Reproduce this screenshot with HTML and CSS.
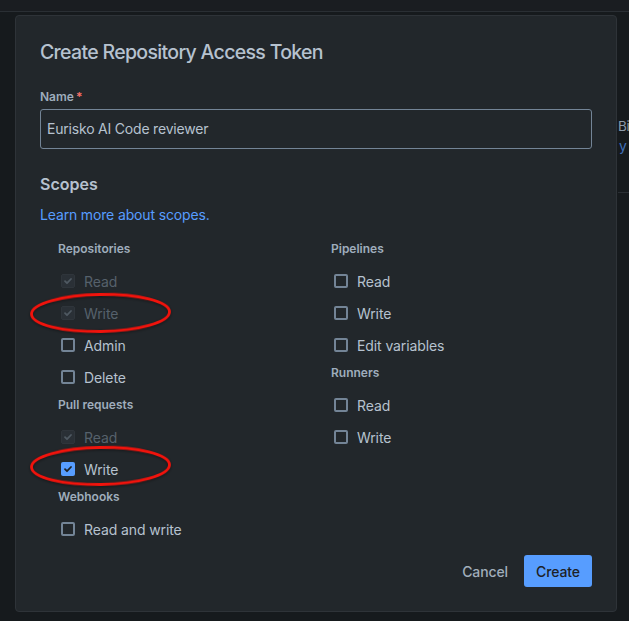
FILE: index.html
```html
<!DOCTYPE html>
<html>
<head>
<meta charset="utf-8">
<link rel="stylesheet" href="styles.css">
</head>
<body>
<div class="page">
  <div class="topbar"></div>
  <div class="bg-side">
    <div class="bg-line1">Bi</div>
    <div class="bg-link">y</div>
    <div class="bg-rule"></div>
  </div>

  <div class="modal">
    <h1 class="title">Create Repository Access Token</h1>
    <label class="field-label">Name<span class="req">*</span></label>
    <div class="input">Eurisko AI Code reviewer</div>

    <h2 class="scopes">Scopes</h2>
    <a class="learn">Learn more about scopes.</a>

    <div class="cols">
      <div class="col">
        <div class="grp">Repositories</div>
        <div class="row disabled"><span class="cb checked-dis"><svg viewBox="0 0 14 14"><path d="M4 7.2l2 2 4-4.2"/></svg></span>Read</div>
        <div class="row disabled"><span class="cb checked-dis"><svg viewBox="0 0 14 14"><path d="M4 7.2l2 2 4-4.2"/></svg></span>Write</div>
        <div class="row"><span class="cb"></span>Admin</div>
        <div class="row"><span class="cb"></span>Delete</div>
        <div class="grp">Pull requests</div>
        <div class="row disabled"><span class="cb checked-dis"><svg viewBox="0 0 14 14"><path d="M4 7.2l2 2 4-4.2"/></svg></span>Read</div>
        <div class="row"><span class="cb checked"><svg viewBox="0 0 14 14"><path d="M4 7.2l2 2 4-4.2"/></svg></span>Write</div>
        <div class="grp">Webhooks</div>
        <div class="row"><span class="cb"></span>Read and write</div>
      </div>
      <div class="col">
        <div class="grp">Pipelines</div>
        <div class="row"><span class="cb"></span>Read</div>
        <div class="row"><span class="cb"></span>Write</div>
        <div class="row"><span class="cb"></span>Edit variables</div>
        <div class="grp">Runners</div>
        <div class="row"><span class="cb"></span>Read</div>
        <div class="row"><span class="cb"></span>Write</div>
      </div>
    </div>

    <div class="footer">
      <button class="btn cancel">Cancel</button>
      <button class="btn create">Create</button>
    </div>
  </div>

  <svg class="marks" width="629" height="621" viewBox="0 0 629 621">
    <ellipse cx="100.5" cy="313" rx="69" ry="18.5" transform="rotate(-1 100 313)"/>
    <ellipse cx="100.5" cy="466" rx="69" ry="18.5" transform="rotate(-1 100 466)"/>
  </svg>
</div>
</body>
</html>
```

FILE: styles.css
```css
html, body {
  margin: 0;
  padding: 0;
  background: #161a1d;
  overflow: hidden;
}
.page {
  position: relative;
  width: 629px;
  height: 621px;
  font-family: "Inter", "Roboto", sans-serif;
  overflow: hidden;
}
.topbar {
  height: 11px;
  background: #1a1d21;
  border-bottom: 1px solid #2a2f34;
}
.bg-side {
  position: absolute;
  left: 618px;
  top: 12px;
  width: 11px;
  height: 600px;
}
.bg-line1 {
  margin-top: 104px;
  font-size: 13.5px;
  line-height: 20px;
  color: #8c9bab;
  white-space: nowrap;
  letter-spacing: -0.3px;
}
.bg-link {
  font-size: 14px;
  line-height: 20px;
  color: #3f6fb8;
  white-space: nowrap;
  margin-left: 1px;
}
.bg-rule {
  margin-top: 36px;
  height: 1px;
  background: #2a2f34;
  width: 11px;
}
.modal {
  position: absolute;
  left: 15px;
  top: 15px;
  width: 602px;
  box-sizing: border-box;
  background: #22272b;
  border: 1px solid #2e3338;
  border-radius: 4px;
  padding: 24px 24px 24px;
  color: #b6c2cf;
}
.title {
  margin: 0;
  font-size: 19.5px;
  line-height: 24px;
  font-weight: 500;
  color: #b6c2cf;
  letter-spacing: -0.68px;
}
.field-label {
  display: block;
  margin-top: 25px;
  font-size: 12px;
  line-height: 16px;
  font-weight: 600;
  color: #9fadbc;
}
.req {
  color: #f87168;
  margin-left: 2px;
}
.input {
  margin-top: 4px;
  height: 40px;
  box-sizing: border-box;
  border: 1px solid #738496;
  border-radius: 3px;
  background: #22272b;
  padding: 0 6px;
  font-size: 14px;
  line-height: 38px;
  color: #b6c2cf;
  letter-spacing: -0.2px;
}
.scopes {
  margin: 25px 0 0;
  font-size: 16px;
  line-height: 20px;
  font-weight: 600;
  color: #b6c2cf;
}
.learn {
  display: block;
  margin-top: 11px;
  font-size: 14px;
  line-height: 20px;
  color: #579dff;
  letter-spacing: -0.15px;
}
.cols {
  margin-top: 12px;
  padding-left: 18px;
  display: grid;
  grid-template-columns: 273px 1fr;
}
.grp {
  height: 24px;
  line-height: 24px;
  margin-bottom: 4px;
  font-size: 12px;
  font-weight: 600;
  color: #9fadbc;
}
.row {
  height: 32px;
  display: flex;
  align-items: center;
  font-size: 14px;
  color: #b6c2cf;
  letter-spacing: -0.1px;
}
.row.disabled {
  color: #56616c;
}
.cb {
  width: 14px;
  height: 14px;
  box-sizing: border-box;
  border: 2px solid #738496;
  border-radius: 2px;
  margin-left: 3px;
  margin-right: 9px;
  display: flex;
  align-items: center;
  justify-content: center;
  flex: none;
}
.cb svg {
  width: 14px;
  height: 14px;
  flex: none;
}
.cb path {
  fill: none;
  stroke-width: 1.8;
  stroke-linecap: round;
  stroke-linejoin: round;
}
.cb.checked-dis {
  border: 1px solid #2f353b;
  background: #2a3036;
}
.cb.checked-dis path {
  stroke: #4f5962;
}
.cb.checked {
  border: none;
  background: #579dff;
}
.cb.checked path {
  stroke: #1d2125;
}
.footer {
  margin-top: 10px;
  display: flex;
  justify-content: flex-end;
  gap: 4px;
}
.btn {
  height: 32px;
  border: none;
  border-radius: 3px;
  padding: 0 12px;
  font-family: "Inter", "Roboto", sans-serif;
  font-size: 14px;
  font-weight: 500;
  letter-spacing: -0.1px;
  cursor: pointer;
}
.cancel {
  background: transparent;
  color: #a1aebb;
}
.create {
  background: #579dff;
  color: #1d2125;
}
.marks {
  position: absolute;
  left: 0;
  top: 0;
  pointer-events: none;
}
.marks ellipse {
  fill: none;
  stroke: #f2130c;
  stroke-width: 2.8;
  filter: drop-shadow(0 1px 1.5px rgba(0,0,0,0.45));
}
```
